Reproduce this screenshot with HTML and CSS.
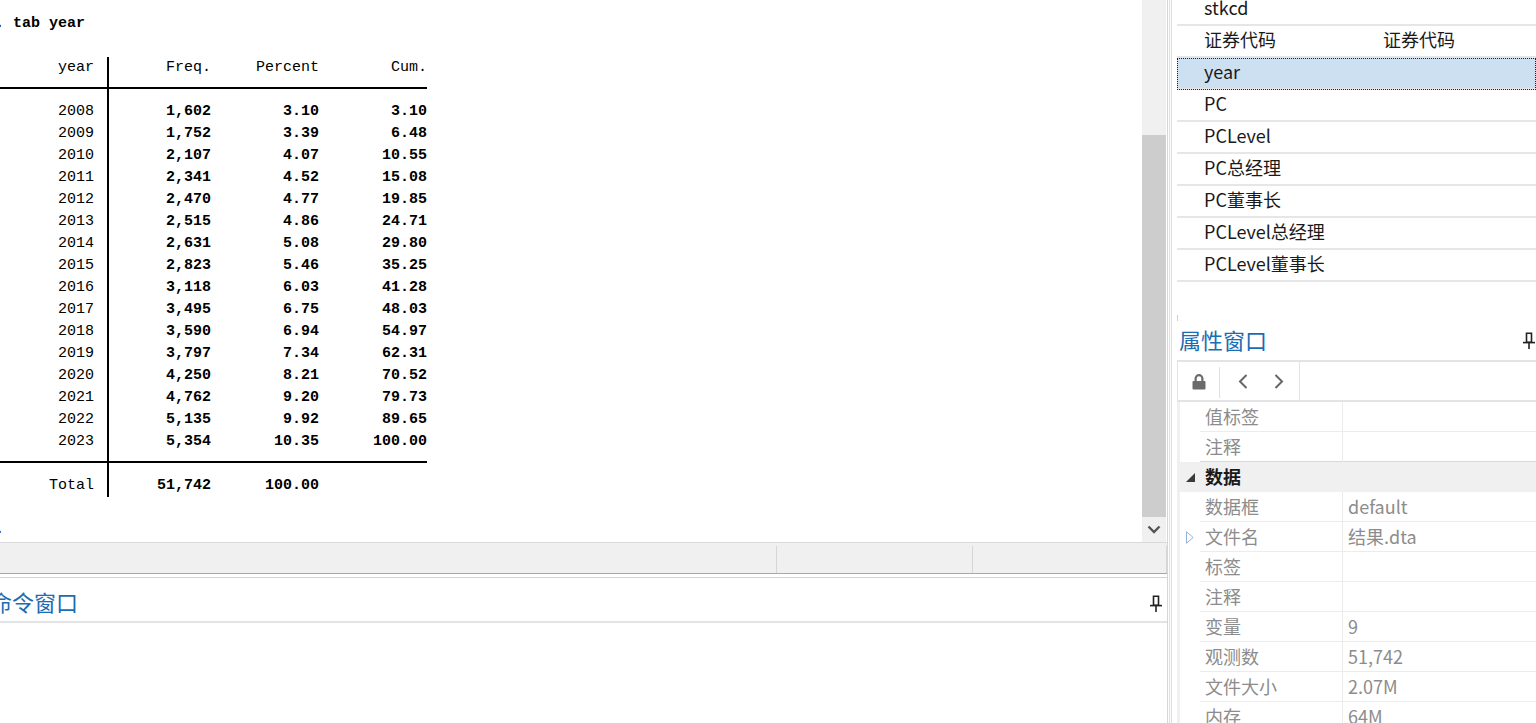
FILE: index.html
```html
<!DOCTYPE html>
<html lang="zh">
<head>
<meta charset="utf-8">
<title>Stata</title>
<link rel="stylesheet" href="styles.css">
</head>
<body>
<div class="app">
  <div class="left">
    <div class="results">
      <div class="out">
        <div class="inner">
          <div class="ln cmd">. tab year</div>
          <div class="ln"></div>
          <div class="tr hdr"><span class="c1">year</span><span class="bar"></span><span class="c2">Freq.</span><span class="c3">Percent</span><span class="c4">Cum.</span></div>
          <div class="tr sep"><span class="c1"></span><span class="bar"></span><span class="c2"></span><span class="c3"></span><span class="c4"></span></div>
          <div class="tr num"><span class="c1">2008</span><span class="bar"></span><span class="c2">1,602</span><span class="c3">3.10</span><span class="c4">3.10</span></div>
          <div class="tr num"><span class="c1">2009</span><span class="bar"></span><span class="c2">1,752</span><span class="c3">3.39</span><span class="c4">6.48</span></div>
          <div class="tr num"><span class="c1">2010</span><span class="bar"></span><span class="c2">2,107</span><span class="c3">4.07</span><span class="c4">10.55</span></div>
          <div class="tr num"><span class="c1">2011</span><span class="bar"></span><span class="c2">2,341</span><span class="c3">4.52</span><span class="c4">15.08</span></div>
          <div class="tr num"><span class="c1">2012</span><span class="bar"></span><span class="c2">2,470</span><span class="c3">4.77</span><span class="c4">19.85</span></div>
          <div class="tr num"><span class="c1">2013</span><span class="bar"></span><span class="c2">2,515</span><span class="c3">4.86</span><span class="c4">24.71</span></div>
          <div class="tr num"><span class="c1">2014</span><span class="bar"></span><span class="c2">2,631</span><span class="c3">5.08</span><span class="c4">29.80</span></div>
          <div class="tr num"><span class="c1">2015</span><span class="bar"></span><span class="c2">2,823</span><span class="c3">5.46</span><span class="c4">35.25</span></div>
          <div class="tr num"><span class="c1">2016</span><span class="bar"></span><span class="c2">3,118</span><span class="c3">6.03</span><span class="c4">41.28</span></div>
          <div class="tr num"><span class="c1">2017</span><span class="bar"></span><span class="c2">3,495</span><span class="c3">6.75</span><span class="c4">48.03</span></div>
          <div class="tr num"><span class="c1">2018</span><span class="bar"></span><span class="c2">3,590</span><span class="c3">6.94</span><span class="c4">54.97</span></div>
          <div class="tr num"><span class="c1">2019</span><span class="bar"></span><span class="c2">3,797</span><span class="c3">7.34</span><span class="c4">62.31</span></div>
          <div class="tr num"><span class="c1">2020</span><span class="bar"></span><span class="c2">4,250</span><span class="c3">8.21</span><span class="c4">70.52</span></div>
          <div class="tr num"><span class="c1">2021</span><span class="bar"></span><span class="c2">4,762</span><span class="c3">9.20</span><span class="c4">79.73</span></div>
          <div class="tr num"><span class="c1">2022</span><span class="bar"></span><span class="c2">5,135</span><span class="c3">9.92</span><span class="c4">89.65</span></div>
          <div class="tr num"><span class="c1">2023</span><span class="bar"></span><span class="c2">5,354</span><span class="c3">10.35</span><span class="c4">100.00</span></div>
          <div class="tr sep"><span class="c1"></span><span class="bar"></span><span class="c2"></span><span class="c3"></span><span class="c4"></span></div>
          <div class="tr num"><span class="c1">Total</span><span class="bar"></span><span class="c2">51,742</span><span class="c3">100.00</span><span class="c4"></span></div>
          <div class="ln"></div>
          <div class="ln prompt">.</div>
        </div>
      </div>
      <div class="vscroll">
        <div class="track"><div class="thumb"></div></div>
        <div class="arrow"><svg width="14" height="9" viewBox="0 0 14 9"><path d="M1.5 1.5 L7 7 L12.5 1.5" fill="none" stroke="#555" stroke-width="2.4"/></svg></div>
      </div>
    </div>
    <div class="status">
      <div class="sc s1"></div>
      <div class="sc s2"></div>
      <div class="sc s3"></div>
    </div>
    <div class="gap"></div>
    <div class="cmdtitle">
      <span class="ttl cmdttl">命令窗口</span>
      <svg class="pin" width="12" height="17" viewBox="0 0 12 17"><path d="M3.5 1.2h5v9h-5z" fill="none" stroke="#222" stroke-width="1.6"/><path d="M0 10.6h12" stroke="#222" stroke-width="1.6"/><path d="M6 11v6" stroke="#222" stroke-width="1.6"/></svg>
    </div>
    <div class="cmdbody"></div>
  </div>
  <div class="split"></div>
  <div class="right">
    <div class="vars">
      <div class="vrow"><span class="a">stkcd</span><span class="b"></span></div>
      <div class="vrow"><span class="a">证券代码</span><span class="b">证券代码</span></div>
      <div class="vrow sel"><span class="a">year</span><span class="b"></span></div>
      <div class="vrow"><span class="a">PC</span><span class="b"></span></div>
      <div class="vrow"><span class="a">PCLevel</span><span class="b"></span></div>
      <div class="vrow"><span class="a">PC总经理</span><span class="b"></span></div>
      <div class="vrow"><span class="a">PC董事长</span><span class="b"></span></div>
      <div class="vrow"><span class="a">PCLevel总经理</span><span class="b"></span></div>
      <div class="vrow"><span class="a">PCLevel董事长</span><span class="b"></span></div>
    </div>
    <div class="vspace"><div class="tick"></div></div>
    <div class="ptitle">
      <span class="ttl">属性窗口</span>
      <svg class="pin pin2" width="12" height="17" viewBox="0 0 12 17"><path d="M3.5 1.2h5v9h-5z" fill="none" stroke="#222" stroke-width="1.6"/><path d="M0 10.6h12" stroke="#222" stroke-width="1.6"/><path d="M6 11v6" stroke="#222" stroke-width="1.6"/></svg>
    </div>
    <div class="tbar">
      <div class="tbox">
        <div class="lockcell"><svg width="14" height="17" viewBox="0 0 14 17"><path d="M3.6 8.5V5.6a3.4 3.4 0 0 1 6.8 0V8.5" fill="none" stroke="#6b6b6b" stroke-width="2.2"/><rect x="0.5" y="8" width="13" height="8.5" rx="1" fill="#6b6b6b"/></svg></div>
        <div class="tsep"></div>
        <div class="navcell">
          <svg width="10" height="15" viewBox="0 0 10 15"><path d="M8.5 1 L2 7.5 L8.5 14" fill="none" stroke="#666" stroke-width="2"/></svg>
          <svg width="10" height="15" viewBox="0 0 10 15"><path d="M1.5 1 L8 7.5 L1.5 14" fill="none" stroke="#666" stroke-width="2"/></svg>
        </div>
      </div>
    </div>
    <div class="grid">
      <div class="prow"><span class="g"></span><span class="n">值标签</span><span class="v"></span></div>
      <div class="prow pre"><span class="g"></span><span class="n">注释</span><span class="v"></span></div>
      <div class="prow cat"><span class="g"><svg width="9" height="9" viewBox="0 0 9 9"><path d="M9 0V9H0Z" fill="#3a3a3a"/></svg></span><span class="n">数据</span><span class="v"></span></div>
      <div class="prow"><span class="g"></span><span class="n">数据框</span><span class="v">default</span></div>
      <div class="prow"><span class="g"><svg width="8" height="13" viewBox="0 0 8 13"><path d="M0.5 0.8 L7.2 6.5 L0.5 12.2Z" fill="none" stroke="#93b2e2" stroke-width="1"/></svg></span><span class="n">文件名</span><span class="v">结果.dta</span></div>
      <div class="prow"><span class="g"></span><span class="n">标签</span><span class="v"></span></div>
      <div class="prow"><span class="g"></span><span class="n">注释</span><span class="v"></span></div>
      <div class="prow"><span class="g"></span><span class="n">变量</span><span class="v">9</span></div>
      <div class="prow"><span class="g"></span><span class="n">观测数</span><span class="v">51,742</span></div>
      <div class="prow"><span class="g"></span><span class="n">文件大小</span><span class="v">2.07M</span></div>
      <div class="prow"><span class="g"></span><span class="n">内存</span><span class="v">64M</span></div>
    </div>
  </div>
</div>
</body>
</html>
```
FILE: styles.css
```css
* { box-sizing: border-box; }
html, body { margin: 0; padding: 0; }
body {
  width: 1536px;
  height: 723px;
  overflow: hidden;
  background: #fff;
  font-family: "Noto Sans CJK SC", "Noto Sans", sans-serif;
}
.app { display: flex; height: 723px; }

/* ---------- left column ---------- */
.left {
  width: 1168px;
  flex: none;
  display: flex;
  flex-direction: column;
  border-right: 1px solid #d6d6d6;
}
.results { height: 542px; flex: none; display: flex; }
.out {
  flex: 1;
  overflow: hidden;
  padding-top: 13px;
  font-family: "Liberation Mono", "DejaVu Sans Mono", monospace;
  font-size: 15px;
  line-height: 22px;
  color: #000;
}
.inner { margin-left: -5px; }
.ln { height: 22px; white-space: pre; }
.cmd { font-weight: bold; }
.prompt { color: #1a2a5a; font-weight: bold; }
.tr { display: flex; height: 22px; white-space: pre; }
.tr span { flex: none; text-align: right; }
.c1 { width: 99px; }
.bar {
  width: 18px;
  background: linear-gradient(#000, #000) no-repeat 13px 0 / 2px 100%;
}
.hdr .bar { background-position: 13px -2px; background-size: 2px 24px; }
.c2 { width: 99px; }
.c3, .c4 { width: 108px; }
.num .c2, .num .c3, .num .c4 { font-weight: bold; }
.sep { background: linear-gradient(#000, #000) no-repeat 0 8px / 432px 2px; }

.vscroll { width: 24px; margin-right: 1px; display: flex; flex-direction: column; }
.track { flex: 1; background: #f0f0f0; padding-top: 135px; display: flex; }
.thumb { flex: 1; background: #cdcdcd; }
.arrow {
  height: 25px;
  background: #f0f0f0;
  display: flex;
  align-items: center;
  justify-content: center;
  padding-bottom: 1px;
}

.status {
  height: 32px;
  flex: none;
  display: flex;
  background: #f0f0f0;
  border-top: 1px solid #d9d9d9;
  border-bottom: 1px solid #a8a8a8;
}
.sc { height: 27px; margin-top: 3px; border-right: 1px solid #d6d6d6; }
.s1 { width: 777px; }
.s2 { width: 196px; }
.s3 { flex: 1; }
.gap { height: 4px; flex: none; border-bottom: 1px solid #d2d2d2; }
.cmdtitle {
  height: 45px;
  flex: none;
  display: flex;
  align-items: flex-start;
  justify-content: space-between;
  padding-top: 8px;
  border-bottom: 2px solid #e3e3e3;
}
.ttl {
  font-size: 22px;
  line-height: 30px;
  color: #1b6cb3;
  white-space: nowrap;
}
.cmdttl { margin-left: -10px; }
.pin { margin-top: 9px; margin-right: 5px; }
.cmdbody { flex: 1; }

/* ---------- splitter ---------- */
.split {
  width: 3px;
  flex: none;
  background: linear-gradient(to right, #fff 1px, #dedede 1px, #dedede 2px, #fff 2px);
}

/* ---------- right column ---------- */
.right {
  flex: 1;
  border-left: 1px solid #dcdcdc;
  padding-left: 5px;
  display: flex;
  flex-direction: column;
  overflow: hidden;
}
.vars { margin-top: -6px; }
.vrow {
  height: 32px;
  display: flex;
  align-items: center;
  padding-left: 27px;
  padding-bottom: 4px;
  border-bottom: 2px solid #e6e6e6;
  font-size: 18px;
  line-height: 26px;
  color: #1a1a1a;
  white-space: nowrap;
}
.vrow .a { width: 179px; flex: none; }
.vrow.sel {
  background: #cde0f1;
  outline: 1px dotted #222;
  outline-offset: -1px;
}
.vspace { height: 40px; flex: none; padding-top: 33px; }
.tick { width: 1px; height: 6px; background: #cfcfcf; }

.ptitle {
  height: 40px;
  flex: none;
  display: flex;
  align-items: center;
  justify-content: space-between;
  padding-left: 2px;
  padding-bottom: 4px;
  border-bottom: 2px solid #e3e3e3;
}
.pin2 { margin: 2px 1px 0 0; }

.tbar { height: 40px; flex: none; display: flex; border-bottom: 2px solid #e3e3e3; }
.tbox {
  width: 123px;
  display: flex;
  border-left: 1px solid #e3e3e3;
  border-right: 1px solid #e3e3e3;
}
.lockcell {
  width: 41px;
  display: flex;
  align-items: center;
  justify-content: center;
  padding-top: 1px;
}
.tsep { width: 1px; margin: 5px 0 2px; background: #e0e0e0; }
.navcell {
  flex: 1;
  display: flex;
  align-items: center;
  gap: 26px;
  padding-left: 18px;
}

.grid { border-left: 3px solid #f0f0f0; }
.prow {
  display: flex;
  height: 30px;
  font-size: 18px;
  line-height: 28px;
  color: #8c8c8c;
  white-space: nowrap;
}
.g {
  width: 20px;
  flex: none;
  display: flex;
  align-items: center;
  padding-left: 6px;
}
.n {
  width: 143px;
  flex: none;
  padding-left: 5px;
  border-right: 1px solid #ececec;
  border-bottom: 1px solid #ececec;
}
.v { flex: 1; padding-left: 5px; border-bottom: 1px solid #ececec; }
.pre .n, .pre .v { border-bottom-color: #d9d9d9; }
.cat { background: #f0f0f0; }
.cat .g { padding-top: 1px; }
.cat .n {
  border-right: none;
  border-bottom-color: #f0f0f0;
  font-weight: bold;
  color: #1a1a1a;
}
.cat .v { border-bottom-color: #f0f0f0; }
```
